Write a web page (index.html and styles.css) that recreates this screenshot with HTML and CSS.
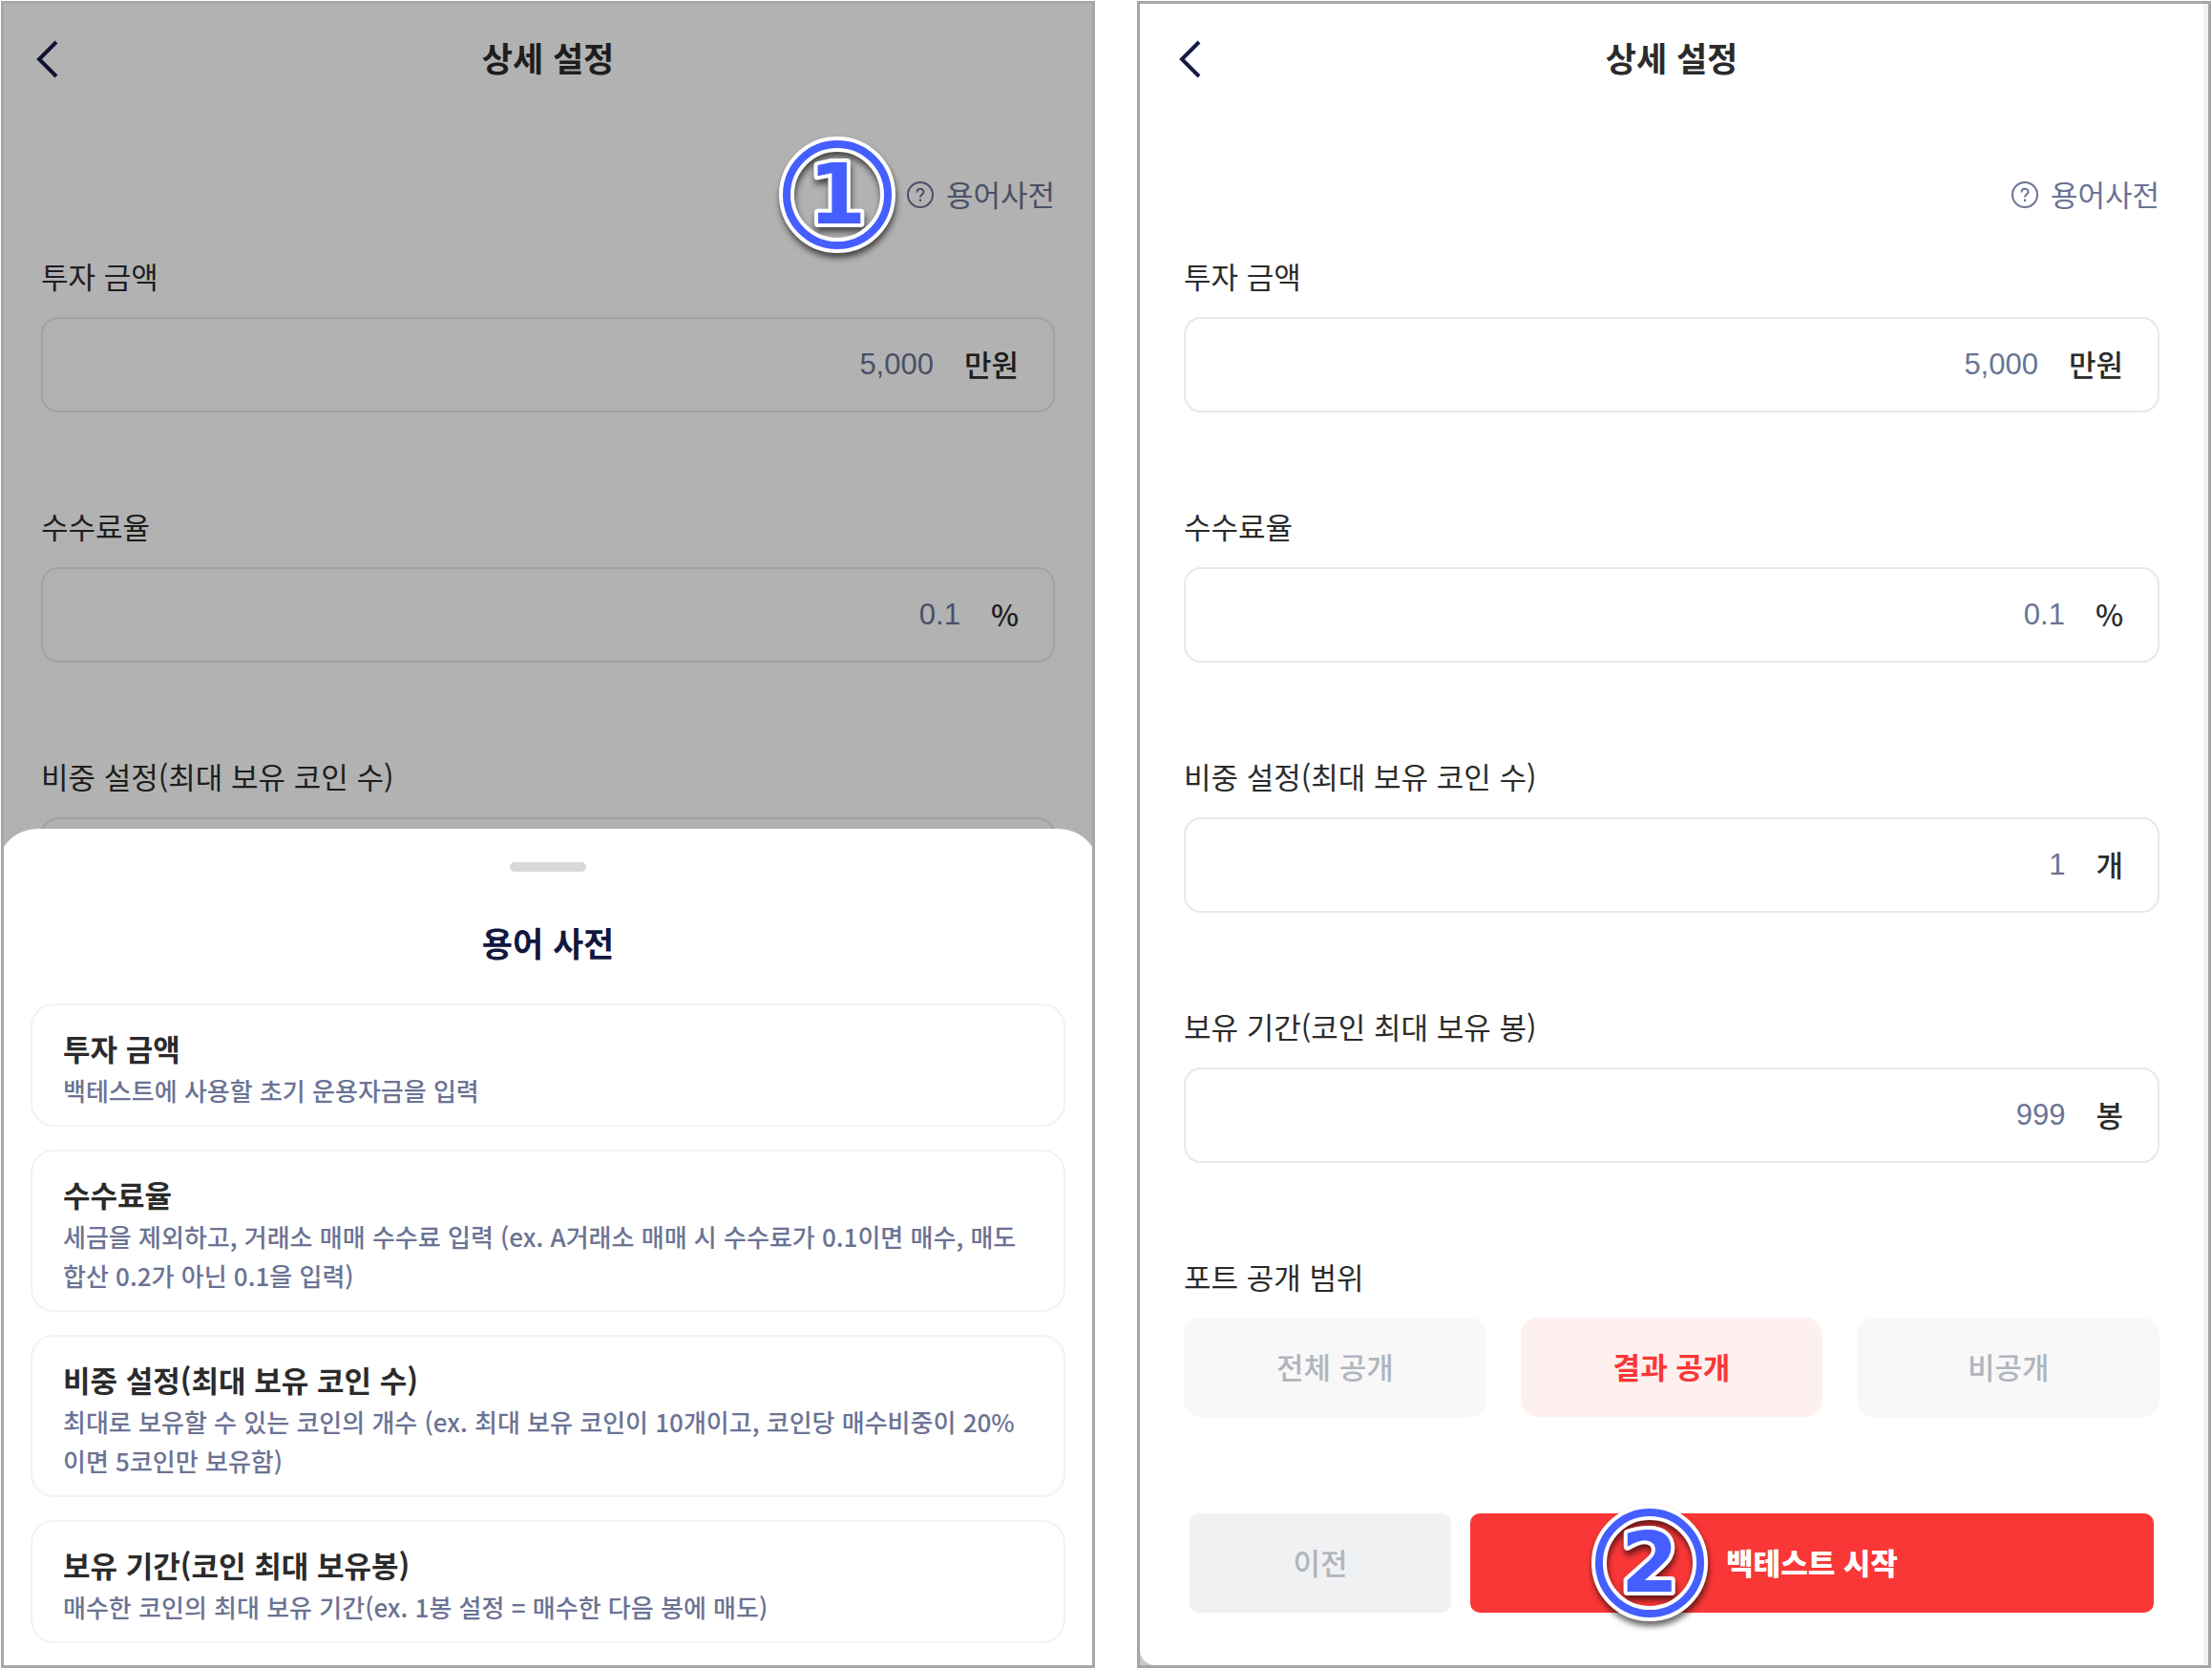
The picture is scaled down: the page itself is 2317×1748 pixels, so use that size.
FILE: index.html
```html
<!DOCTYPE html>
<html lang="ko">
<head>
    <meta charset="UTF-8">
    <meta name="viewport" content="width=device-width, initial-scale=1.0">
    <title>상세 설정</title>
    <link rel="stylesheet" href="styles.css">
</head>
<body>
    <div class="container">
        <section class="screen screen_dim">
            <div class="page">
                <header class="page-header">
                    <button type="button" class="back_btn" aria-label="뒤로">
                        <svg width="24" height="40" viewBox="0 0 24 40" fill="none" stroke="#161b46" stroke-width="4">
                            <path d="M22 2 L4 20 L22 38"/>
                        </svg>
                    </button>
                    <h1 class="page-title">상세 설정</h1>
                </header>
                <div class="guide">
                    <a href="#dictionary" class="guide_link">
                        <svg class="guide_icon" width="30" height="30" viewBox="0 0 30 30" fill="none" stroke="currentColor" stroke-width="2">
                            <circle cx="15" cy="15" r="13"/>
                            <path d="M11.5 12.5 C11.5 7.5 18.5 7.5 18.5 12 C18.5 14.5 15 14.5 15 17.5"/>
                            <path d="M15 19.5 V22"/>
                        </svg>
                        <span>용어사전</span>
                        <span class="step step_guide">
                            <svg width="150" height="150" viewBox="0 0 150 150">
                                <g class="step_shape">
                                    <circle class="ring_line" cx="75" cy="75" r="53"/>
                                    <circle class="ring" cx="75" cy="75" r="53"/>
                                    <text class="step_num" x="75" y="105" text-anchor="middle">1</text>
                                </g>
                            </svg>
                        </span>
                    </a>
                </div>
                <form class="form">
                    <div class="field">
                        <label for="amount1">투자 금액</label>
                        <div class="input_box">
                            <input type="text" id="amount1" value="5,000">
                            <span class="unit">만원</span>
                        </div>
                    </div>
                    <div class="field">
                        <label for="fee1">수수료율</label>
                        <div class="input_box">
                            <input type="text" id="fee1" value="0.1">
                            <span class="unit">%</span>
                        </div>
                    </div>
                    <div class="field">
                        <label for="weight1">비중 설정(최대 보유 코인 수)</label>
                        <div class="input_box">
                            <input type="text" id="weight1">
                        </div>
                    </div>
                </form>
            </div>
            <div class="dim"></div>
            <div class="sheet" id="dictionary">
                <div class="sheet_handle"></div>
                <h2 class="sheet_title">용어 사전</h2>
                <dl class="term_list">
                    <div class="term">
                        <dt>투자 금액</dt>
                        <dd>백테스트에 사용할 초기 운용자금을 입력</dd>
                    </div>
                    <div class="term">
                        <dt>수수료율</dt>
                        <dd>세금을 제외하고, 거래소 매매 수수료 입력 (ex. A거래소 매매 시 수수료가 0.1이면 매수, 매도 합산 0.2가 아닌 0.1을 입력)</dd>
                    </div>
                    <div class="term">
                        <dt>비중 설정(최대 보유 코인 수)</dt>
                        <dd>최대로 보유할 수 있는 코인의 개수 (ex. 최대 보유 코인이 10개이고, 코인당 매수비중이 20%이면 5코인만 보유함)</dd>
                    </div>
                    <div class="term">
                        <dt>보유 기간(코인 최대 보유봉)</dt>
                        <dd>매수한 코인의 최대 보유 기간(ex. 1봉 설정 = 매수한 다음 봉에 매도)</dd>
                    </div>
                </dl>
            </div>
        </section>

        <section class="screen screen_form">
            <div class="page">
                <header class="page-header">
                    <button type="button" class="back_btn" aria-label="뒤로">
                        <svg width="24" height="40" viewBox="0 0 24 40" fill="none" stroke="#161b46" stroke-width="4">
                            <path d="M22 2 L4 20 L22 38"/>
                        </svg>
                    </button>
                    <h1 class="page-title">상세 설정</h1>
                </header>
                <div class="guide">
                    <a href="#dictionary" class="guide_link">
                        <svg class="guide_icon" width="30" height="30" viewBox="0 0 30 30" fill="none" stroke="currentColor" stroke-width="2">
                            <circle cx="15" cy="15" r="13"/>
                            <path d="M11.5 12.5 C11.5 7.5 18.5 7.5 18.5 12 C18.5 14.5 15 14.5 15 17.5"/>
                            <path d="M15 19.5 V22"/>
                        </svg>
                        <span>용어사전</span>
                    </a>
                </div>
                <form class="form">
                    <div class="field">
                        <label for="amount">투자 금액</label>
                        <div class="input_box">
                            <input type="text" id="amount" value="5,000">
                            <span class="unit">만원</span>
                        </div>
                    </div>
                    <div class="field">
                        <label for="fee">수수료율</label>
                        <div class="input_box">
                            <input type="text" id="fee" value="0.1">
                            <span class="unit">%</span>
                        </div>
                    </div>
                    <div class="field">
                        <label for="weight">비중 설정(최대 보유 코인 수)</label>
                        <div class="input_box">
                            <input type="text" id="weight" value="1">
                            <span class="unit">개</span>
                        </div>
                    </div>
                    <div class="field">
                        <label for="period">보유 기간(코인 최대 보유 봉)</label>
                        <div class="input_box">
                            <input type="text" id="period" value="999">
                            <span class="unit">봉</span>
                        </div>
                    </div>
                    <div class="field" role="group" aria-labelledby="scope">
                        <span class="field_name" id="scope">포트 공개 범위</span>
                        <div class="scope_list">
                            <button type="button" class="scope_btn">전체 공개</button>
                            <button type="button" class="scope_btn active">결과 공개</button>
                            <button type="button" class="scope_btn">비공개</button>
                        </div>
                    </div>
                    <div class="bottom_btns">
                        <button type="button" class="prev_btn">이전</button>
                        <button type="button" class="start_btn">
                            백테스트 시작
                            <span class="step step_start">
                                <svg width="150" height="150" viewBox="0 0 150 150">
                                    <g class="step_shape">
                                        <circle class="ring_line" cx="75" cy="75" r="53"/>
                                        <circle class="ring" cx="75" cy="75" r="53"/>
                                        <text class="step_num" x="75" y="105" text-anchor="middle">2</text>
                                    </g>
                                </svg>
                            </span>
                        </button>
                    </div>
                </form>
            </div>
        </section>
    </div>
</body>
</html>
```

FILE: styles.css
```css
* {
    box-sizing: border-box;
}
body {
    margin: 0;
    background: #fff;
    color: #2b2b2b;
    font-family: "Noto Sans CJK KR", sans-serif;
}
button, input {
    font-family: inherit;
    border: none;
    background: none;
    padding: 0;
}
h1, h2, dl, dt, dd {
    margin: 0;
}
.container {
    display: grid;
    grid-template-columns: 1146fr 1125fr;
    gap: 44px;
    padding: 1px;
    min-height: 100vh;
}
.screen {
    position: relative;
    border: 3px solid #a5a6a6;
    overflow: hidden;
}
.page {
    padding: 0 39px;
}
.screen_form {
    display: flex;
    background: #c8c8c8;
}
.screen_form .page {
    flex: 1;
    padding: 0 46px;
    border-right: 5px solid #f0f0f0;   /* 스크롤바 영역 */
    border-bottom-left-radius: 16px;
    background: #fff;
}

/* 상단 헤더 */
.page-header {
    display: grid;
    grid-template-columns: 24px 1fr 24px;
    align-items: center;
    height: 116px;
    margin: 0 -6px;
}
.back_btn {
    display: flex;
    justify-content: center;
    cursor: pointer;
}
.page-title {
    padding-bottom: 4px;
    font-size: 35px;
    line-height: 52px;
    font-weight: 700;
    text-align: center;
}
.guide {
    display: flex;
    justify-content: flex-end;
    padding: 60px 0 40px;
}
.guide_link {
    position: relative;
    display: flex;
    align-items: center;
    gap: 12px;
    color: #6b7394;
    font-size: 31px;
    line-height: 48px;
    text-decoration: none;
}
.guide_link > span:not(.step) {
    padding-bottom: 2px;
    line-height: 46px;
}

/* 입력 폼 */
.field {
    margin-bottom: 98px;
}
.field label, .field_name {
    display: block;
    font-size: 31px;
    line-height: 42px;
    margin-bottom: 22px;
}
.input_box {
    display: flex;
    align-items: center;
    gap: 32px;
    height: 100px;
    padding: 0 36px;
    border: 2px solid #e8e8e8;
    border-radius: 18px;
}
.input_box input {
    flex: 1;
    min-width: 0;
    color: #6b7394;
    font-family: "Liberation Sans", sans-serif;
    font-size: 31px;
    text-align: right;
    outline: none;
}
.unit {
    padding-bottom: 4px;
    font-size: 31px;
    font-weight: 500;
}

/* 공개 범위 */
.scope_list {
    display: grid;
    grid-template-columns: repeat(3, 1fr);
    gap: 36px;
}
.scope_btn {
    height: 104px;
    padding-bottom: 4px;
    border-radius: 18px;
    background: #f8f8f8;
    color: #b0b5be;
    font-size: 31px;
    font-weight: 500;
    cursor: pointer;
}
.scope_btn.active {
    background: #fff0f0;
    color: #fa3737;
    font-weight: 700;
}
.bottom_btns {
    display: grid;
    grid-template-columns: 274fr 716fr;
    gap: 20px;
    padding: 3px 6px 0;
}
.prev_btn, .start_btn {
    height: 104px;
    padding-bottom: 4px;
    border-radius: 10px;
    font-size: 31px;
    cursor: pointer;
}
.prev_btn {
    background: #f0f1f3;
    color: #b0b5be;
    font-weight: 500;
}
.start_btn {
    position: relative;
    background: #fa3737;
    color: #fff;
    font-weight: 900;
}

/* 용어 사전 바텀시트 */
.dim {
    position: absolute;
    inset: 0;
    background: rgba(0, 0, 0, 0.3);
}
.sheet {
    position: absolute;
    left: -8px;
    right: -8px;
    bottom: 0;
    padding: 35px 36px 23px;
    background: #fff;
    border-radius: 44px 44px 0 0;
}
.sheet_handle {
    width: 80px;
    height: 10px;
    margin: 0 auto 48px;
    border-radius: 5px;
    background: #d9d9d9;
}
.sheet_title {
    margin-bottom: 38px;
    color: #12173f;
    font-size: 35px;
    line-height: 52px;
    text-align: center;
}
.term_list {
    display: flex;
    flex-direction: column;
    gap: 24px;
}
.term {
    padding: 22px 32px 16px;
    border: 2px solid #f2f2f2;
    border-radius: 24px;
}
.term dt {
    font-size: 31px;
    line-height: 46px;
    font-weight: 700;
}
.term dd {
    color: #6b7394;
    font-size: 26px;
    line-height: 41px;
    font-weight: 500;
}

/* 순서 표시 뱃지 */
.step {
    position: absolute;
    top: 50%;
    margin-top: -75px;
    width: 150px;
    height: 150px;
}
.step svg {
    display: block;
}
.step_guide {
    right: 100%;
    margin-right: -3px;
    z-index: 2;
}
.step_start {
    left: 113px;
}
.step_shape {
    filter: drop-shadow(1px 5px 3px rgba(0, 0, 0, 0.6));
}
.ring, .ring_line {
    fill: none;
    stroke: #445eff;
    stroke-width: 8px;
}
.ring_line {
    stroke: #fff;
    stroke-width: 16px;
}
.step_num {
    fill: #445eff;
    stroke: #fff;
    stroke-width: 8px;
    stroke-linejoin: round;
    paint-order: stroke;
    font-family: "DejaVu Sans", sans-serif;
    font-size: 87px;
    font-weight: 700;
}
```
